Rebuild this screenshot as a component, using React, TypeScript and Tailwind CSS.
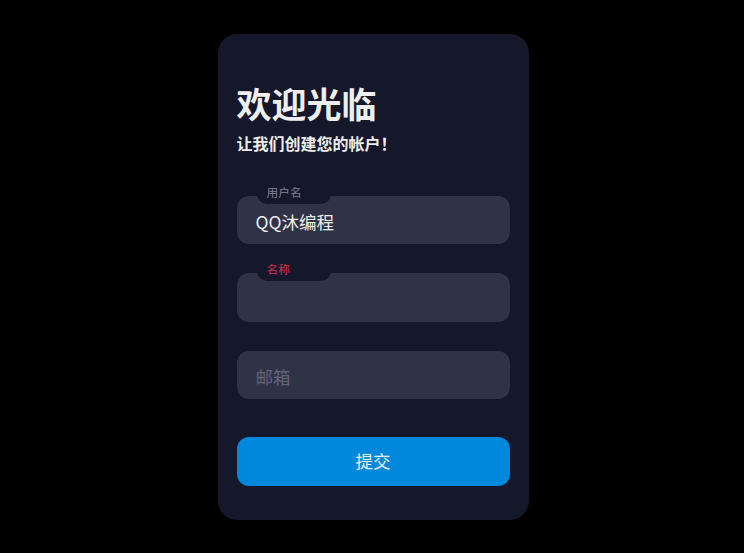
const font = { fontFamily: '"Noto Sans CJK SC", "Liberation Sans", sans-serif' };

function Field({ label, labelColor, value, placeholder }: { label?: string; labelColor?: string; value?: string; placeholder?: string }) {
  return (
    <div className="relative h-[48.6px] w-full">
      <input
        className="box-border h-full w-full rounded-[12px] border-0 bg-[#303245] px-[19px] pt-[4px] text-[17.5px] text-[#eee] outline-none placeholder:text-[#65657b]"
        defaultValue={value}
        placeholder={placeholder}
        style={font}
      />
      {label && (
        <div className="absolute left-[20px] top-[-12px] flex h-[20px] w-[74px] items-start rounded-[10px] bg-[#15172b] pl-[10px] pt-[1px]">
          <span className={`text-[11.7px] leading-[14px] ${labelColor}`}>{label}</span>
        </div>
      )}
    </div>
  );
}

export default function App() {
  return (
    <div className="flex min-h-screen items-center justify-center bg-black pl-[2px]" style={font}>
      <form className="box-border flex h-[486px] w-[311px] flex-col rounded-[19px] bg-[#15172b] p-[19px]">
        <div className="mt-[29px] text-[35px] font-bold leading-[42px] text-[#eee]">欢迎光临</div>
        <div className="mt-[8px] text-[16px] font-bold leading-[22px] text-[#eee]">让我们创建您的帐户！</div>

        <div className="mt-[42px] flex flex-col gap-[29px]">
          <Field label="用户名" labelColor="text-[#808097]" value="QQ沐编程" />
          <Field label="名称" labelColor="text-[#dc2f55]" />
          <Field placeholder="邮箱" />
        </div>

        <button
          type="button"
          className="mt-[37.5px] box-border h-[49px] w-full rounded-[12px] border-0 bg-[#08d] text-center text-[17.5px] text-[#eee]"
          style={font}
        >
          提交
        </button>
      </form>
    </div>
  );
}
